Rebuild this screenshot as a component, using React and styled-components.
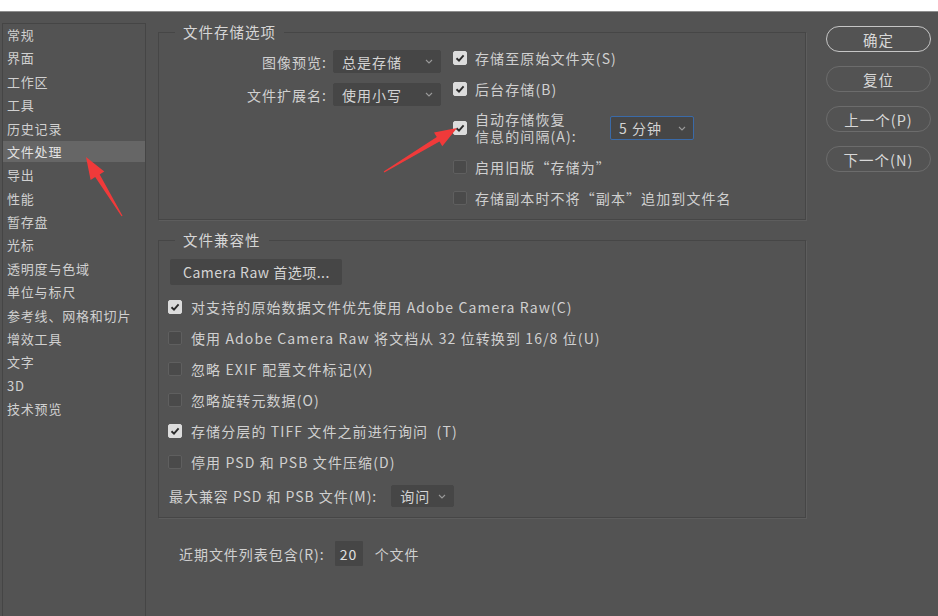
import React from 'react'
import styled, { createGlobalStyle } from 'styled-components'

const GlobalStyle = createGlobalStyle`
  html, body {
    margin:0;
    padding:0;
    height:100%;
    overflow:hidden;
    background:#535353;
  }
  body{
    font-family:"Noto Sans CJK SC","Noto Sans",sans-serif;
    color:#d2d2d2;
  }
  #root{ height:100%; }
`

const Window = styled.div`
    position:relative;
    height:100vh;
    display:flex;
    flex-direction:column;
    background:#535353;
`
const TitleStrip = styled.div`
    flex:none;
    height:11px;
    background:#fff;
    border-bottom:1px solid #8e8e8e;
`
const Body = styled.div`
    flex:1;
    display:flex;
    min-height:0;
`
const Sidebar = styled.ul`
    list-style:none;
    margin:11px 0 -20px 2px;
    padding:0;
    width:142px;
    border:1px solid #454545;
    display:flex;
    flex-direction:column;
    gap:2.38px;
`
const SideItem = styled.li`
    height:21px;
    line-height:21px;
    padding-left:4px;
    font-size:13px;
    letter-spacing:0.8px;
    color:${({active})=> active ? '#e2e2e2' : '#d0d0d0'};
    background:${({active})=> active ? '#666666' : 'transparent'};
    white-space:nowrap;
`
const Main = styled.div`
    margin-left:12px;
    width:648px;
    padding-top:11px;
    display:flex;
    flex-direction:column;
`
const Group = styled.fieldset`
    margin:0;
    padding:0 0 10px;
    min-width:0;
    border:1px solid #464646;
    box-shadow:1px 1px 0 #5d5d5d;
    & + &{ margin-top:11px; }
`
const Legend = styled.legend`
    margin-left:16px;
    padding:0 8px;
    font-size:14.5px;
    line-height:18px;
    letter-spacing:1px;
    color:#d6d6d6;
`
const StorageBody = styled.div`
    display:flex;
    padding-top:7px;
`
const SelectGrid = styled.div`
    width:282px;
    margin-top:2px;
    display:grid;
    grid-template-columns:1fr 108px;
    grid-auto-rows:23px;
    column-gap:6px;
    row-gap:10px;
    align-items:center;
    align-self:flex-start;
`
const Label = styled.span`
    font-size:14px;
    letter-spacing:1px;
    color:#d0d0d0;
    white-space:nowrap;
    justify-self:${({right})=> right ? 'end' : 'start'};
`
const CheckList = styled.div`
    margin-left:12px;
    margin-top:-1px;
    display:flex;
    flex-direction:column;
    gap:9px;
`
const CheckRow = styled.div`
    display:flex;
    align-items:center;
    gap:${({gap})=> gap || 8}px;
    min-height:22px;
    font-size:14px;
    letter-spacing:1.1px;
    color:#d0d0d0;
    white-space:pre;
`
const TwoLine = styled.span`
    width:127px;
    display:flex;
    flex-direction:column;
    padding:2px 0;
`
const Line = styled.span`
    height:17px;
    line-height:17px;
`
const Box = styled.span`
    flex:none;
    width:14px;
    height:14px;
    box-sizing:border-box;
    border-radius:2px;
    display:flex;
    align-items:center;
    justify-content:center;
    background:${({checked})=> checked ? '#dcdcdc' : '#4a4a4a'};
    border:1px solid ${({checked})=> checked ? '#dcdcdc' : '#5f5f5f'};
`
const SelectBox = styled.div`
    box-sizing:border-box;
    width:${({w})=> w}px;
    height:${({h})=> h || 23}px;
    display:flex;
    align-items:center;
    justify-content:space-between;
    padding:0 7px 0 8px;
    background:#464646;
    border:1px solid ${({focus})=> focus ? '#3a6aa8' : '#464646'};
    border-radius:2px;
    font-size:14px;
    letter-spacing:1px;
    color:#d4d4d4;
    white-space:nowrap;
`
const CompatBody = styled.div`
    padding:10px 0 0 9px;
    display:flex;
    flex-direction:column;
    gap:9px;
`
const RawButton = styled.div`
    align-self:flex-start;
    margin:0 0 2px 2px;
    height:26px;
    width:172px;
    box-sizing:border-box;
    padding-left:13px;
    display:flex;
    align-items:center;
    background:#464646;
    border-radius:2px;
    font-size:14px;
    letter-spacing:0.5px;
    color:#d4d4d4;
    white-space:nowrap;
`
const CompatRow = styled.div`
    margin-top:3px;
    padding-left:1px;
    display:flex;
    align-items:center;
    gap:14px;
    font-size:14px;
    letter-spacing:0.95px;
    color:#d0d0d0;
    white-space:nowrap;
`
const RecentRow = styled.div`
    margin-top:23px;
    padding-left:21px;
    display:flex;
    align-items:center;
    font-size:14px;
    letter-spacing:0.95px;
    color:#d0d0d0;
    white-space:nowrap;
`
const NumInput = styled.div`
    margin:0 12px 0 10px;
    width:28px;
    height:25px;
    box-sizing:border-box;
    padding-left:5px;
    display:flex;
    align-items:center;
    background:#464646;
    border-radius:1px;
    color:#e0e0e0;
`
const Buttons = styled.div`
    margin-left:20px;
    padding-top:14px;
    width:105px;
    display:flex;
    flex-direction:column;
    gap:14px;
`
const PillButton = styled.div`
    height:26px;
    box-sizing:border-box;
    border-radius:13px;
    border:${({primary})=> primary ? '1.5px solid #c6c6c6' : '1px solid #6c6c6c'};
    display:flex;
    align-items:center;
    justify-content:center;
    font-size:14.5px;
    letter-spacing:1px;
    color:#d8d8d8;
`
const Overlay = styled.svg`
    position:absolute;
    left:0;
    top:0;
    width:100%;
    height:100%;
    pointer-events:none;
`

const Chevron = () => (
    <svg width="8" height="5" viewBox="0 0 8 5">
        <path d="M1 1 L4 4 L7 1" fill="none" stroke="#9a9a9a" strokeWidth="1.1"/>
    </svg>
)

const Check = ({checked}) => (
    <Box checked={checked}>
        {checked && <svg width="10" height="10" viewBox="0 0 10 10">
            <path d="M1.5 5.2 L4 7.6 L8.6 2.4" fill="none" stroke="#2b2b2b" strokeWidth="1.9"/>
        </svg>}
    </Box>
)

const Select = ({w, h, focus, children}) => (
    <SelectBox w={w} h={h} focus={focus}>
        <span>{children}</span>
        <Chevron/>
    </SelectBox>
)

// red annotation arrow from tail to tip
const arrowPoints = ([x1,y1],[x2,y2]) => {
    const dx = x2-x1, dy = y2-y1
    const len = Math.hypot(dx,dy)
    const ux = dx/len, uy = dy/len
    const nx = -uy, ny = ux
    const head = 22
    const bx = x2-ux*head, by = y2-uy*head
    const p = (x,y,w)=> `${(x+nx*w).toFixed(1)},${(y+ny*w).toFixed(1)}`
    return [
        p(x1,y1,0.6), p(bx,by,2.6), p(bx,by,8), `${x2},${y2}`,
        p(bx,by,-8), p(bx,by,-2.6), p(x1,y1,-0.6)
    ].join(' ')
}

const sideItems = ['常规','界面','工作区','工具','历史记录','文件处理','导出','性能','暂存盘','光标','透明度与色域','单位与标尺','参考线、网格和切片','增效工具','文字','3D','技术预览']

const compatChecks = [
    {label:'对支持的原始数据文件优先使用 Adobe Camera Raw(C)', checked:true},
    {label:'使用 Adobe Camera Raw 将文档从 32 位转换到 16/8 位(U)'},
    {label:'忽略 EXIF 配置文件标记(X)'},
    {label:'忽略旋转元数据(O)'},
    {label:'存储分层的 TIFF 文件之前进行询问  (T)', checked:true},
    {label:'停用 PSD 和 PSB 文件压缩(D)'},
]

export default function App(){
    return (
        <Window>
            <GlobalStyle/>
            <TitleStrip/>
            <Body>
                <Sidebar>
                    {sideItems.map(s => <SideItem key={s} active={s==='文件处理'}>{s}</SideItem>)}
                </Sidebar>
                <Main>
                    <Group>
                        <Legend>文件存储选项</Legend>
                        <StorageBody>
                            <SelectGrid>
                                <Label right>图像预览:</Label>
                                <Select w={108}>总是存储</Select>
                                <Label right>文件扩展名:</Label>
                                <Select w={108}>使用小写</Select>
                            </SelectGrid>
                            <CheckList>
                                <CheckRow><Check checked/>存储至原始文件夹(S)</CheckRow>
                                <CheckRow><Check checked/>后台存储(B)</CheckRow>
                                <CheckRow>
                                    <Check checked/>
                                    <TwoLine>
                                        <Line>自动存储恢复</Line>
                                        <Line>信息的间隔(A):</Line>
                                    </TwoLine>
                                    <Select w={84} h={24} focus>5 分钟</Select>
                                </CheckRow>
                                <CheckRow><Check/>启用旧版“存储为”</CheckRow>
                                <CheckRow><Check/>存储副本时不将“副本”追加到文件名</CheckRow>
                            </CheckList>
                        </StorageBody>
                    </Group>
                    <Group>
                        <Legend>文件兼容性</Legend>
                        <CompatBody>
                            <RawButton>Camera Raw 首选项...</RawButton>
                            {compatChecks.map(c => (
                                <CheckRow key={c.label} gap={9}>
                                    <Check checked={c.checked}/>{c.label}
                                </CheckRow>
                            ))}
                            <CompatRow>
                                最大兼容 PSD 和 PSB 文件(M):
                                <Select w={63} h={22}>询问</Select>
                            </CompatRow>
                        </CompatBody>
                    </Group>
                    <RecentRow>
                        近期文件列表包含(R):
                        <NumInput>20</NumInput>
                        个文件
                    </RecentRow>
                </Main>
                <Buttons>
                    <PillButton primary>确定</PillButton>
                    <PillButton>复位</PillButton>
                    <PillButton>上一个(P)</PillButton>
                    <PillButton>下一个(N)</PillButton>
                </Buttons>
            </Body>
            <Overlay>
                <polygon points={arrowPoints([122,216],[86,157])} fill="#f03a3a"/>
                <polygon points={arrowPoints([384,172],[457,128])} fill="#f03a3a"/>
            </Overlay>
        </Window>
    )
}
